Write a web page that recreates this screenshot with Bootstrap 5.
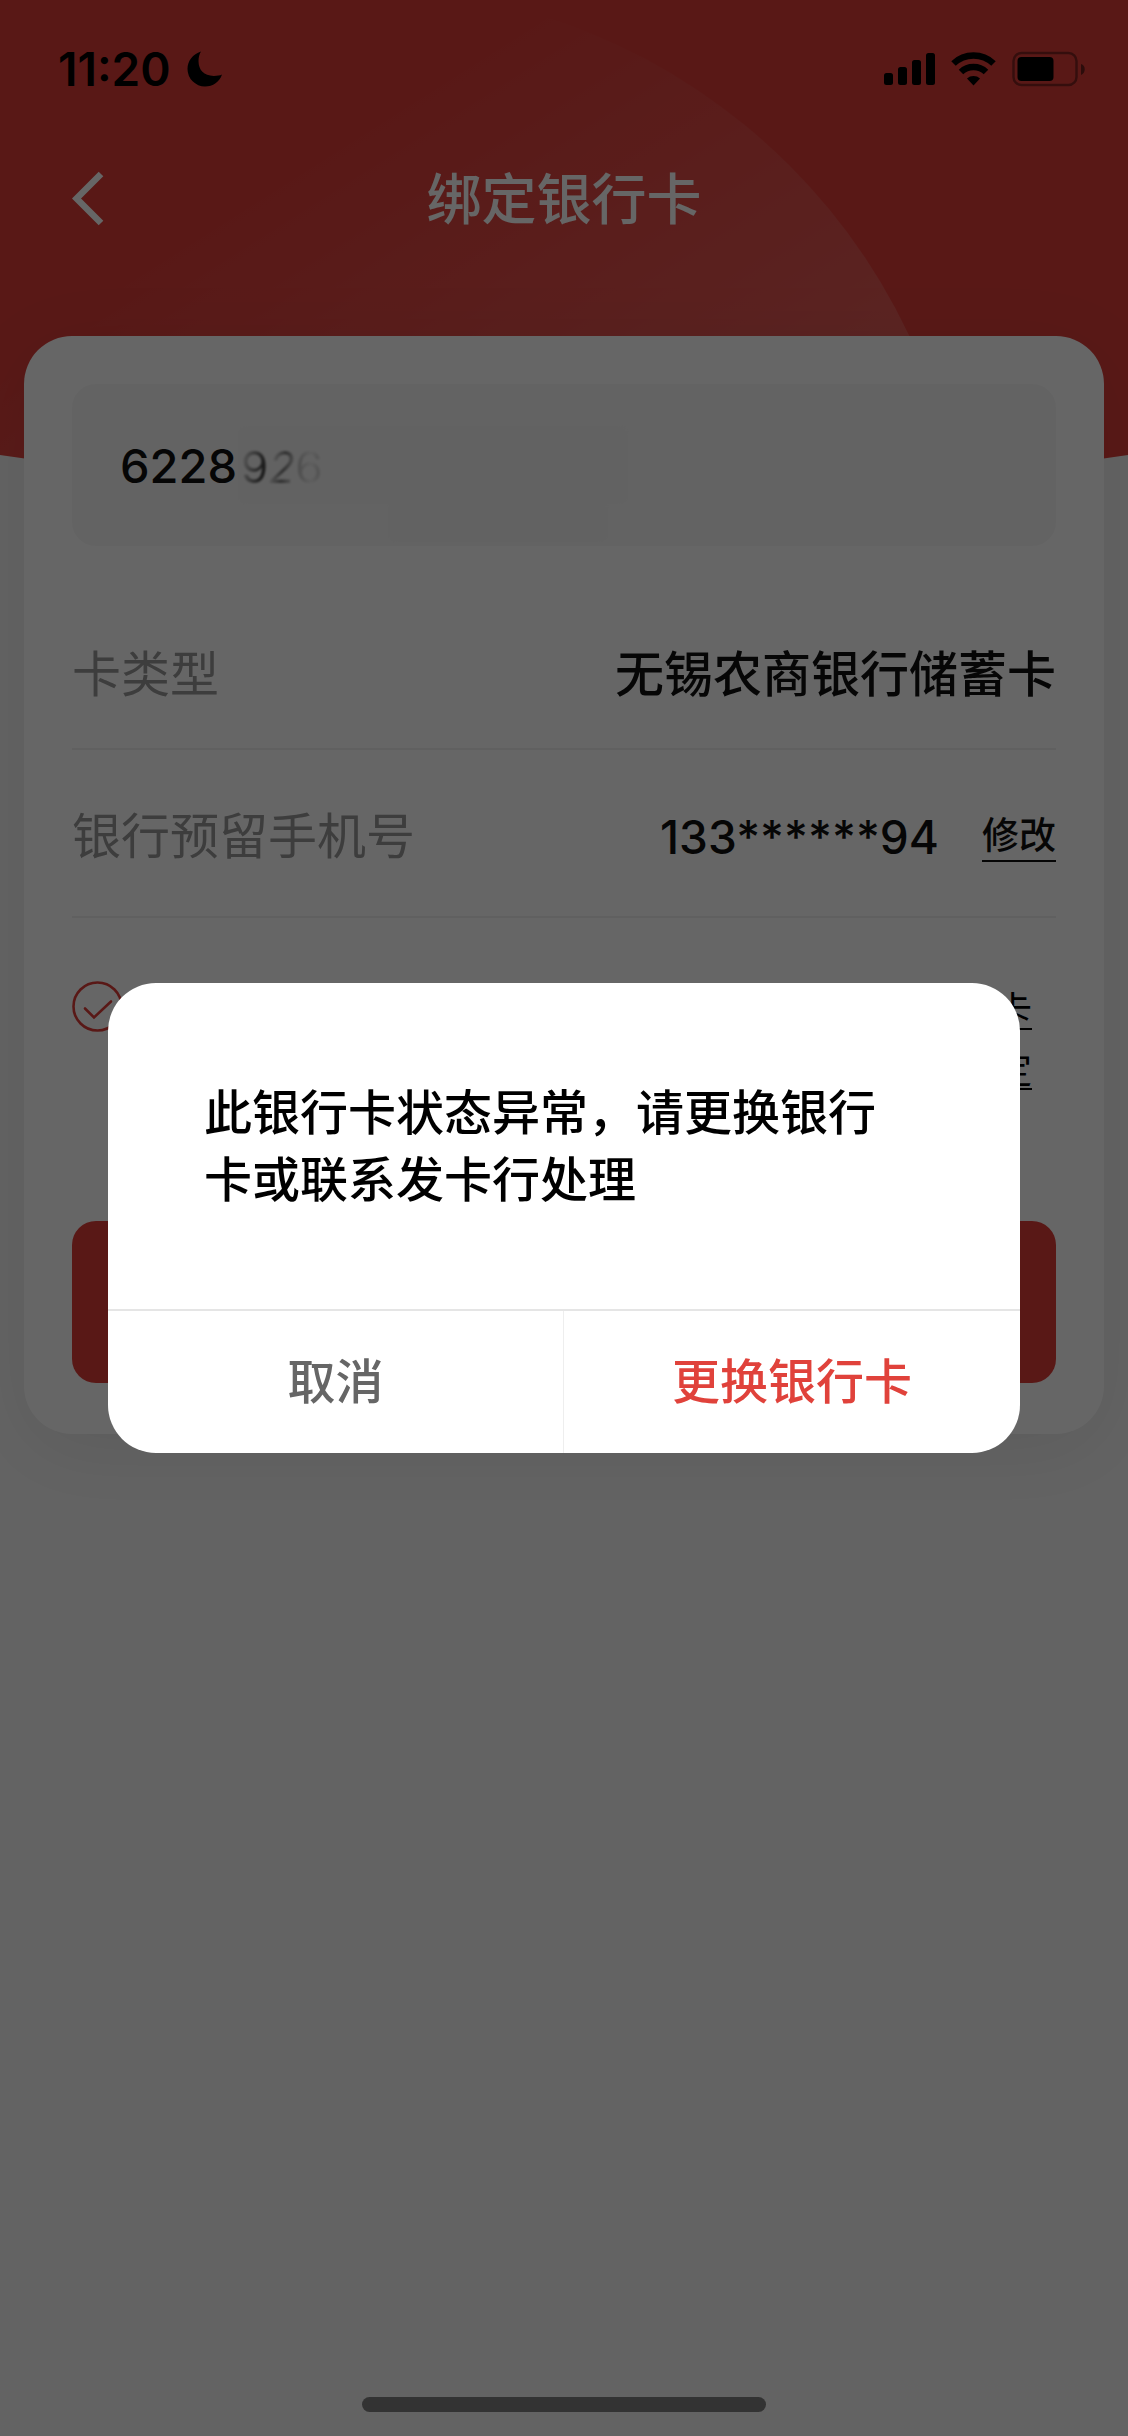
<!DOCTYPE html>
<html lang="zh-CN">
<head>
<meta charset="utf-8">
<meta name="viewport" content="width=device-width, initial-scale=1">
<title>绑定银行卡</title>
<link rel="stylesheet" href="https://cdn.jsdelivr.net/npm/bootstrap@5.3.0/dist/css/bootstrap.min.css">
<style>
  :root { --brand: #de3e39; --ink: #111; }
  body {
    font-family: Inter, "Noto Sans CJK SC", sans-serif;
    background: #f8f8f8;
    color: var(--ink);
    font-size: 48px;
    line-height: 72px;
  }
  /* red header with the curved lower edge */
  .hero { height: 500px; }
  .hero-art { position: absolute; inset: 0; width: 100%; height: 100%; }
  .status-row { height: 138px; padding: 0 42px 0 58px; color: #000; }
  .clock { font-size: 46px; font-weight: 600; }
  .title-row { height: 122px; padding: 0 72px; }
  .title-row h1 { font-size: 55px; font-weight: 500; line-height: 80px; }
  .title-side { width: 32px; }

  .bind-card {
    margin: -164px 24px 0;
    padding: 48px 48px 51px;
    border-radius: 48px;
    background: #fff;
    box-shadow: 0 16px 80px rgba(0, 0, 0, .08);
  }
  .number-box .form-control {
    height: 162px;
    padding: 0 48px;
    border: 0;
    border-radius: 24px;
    background: #f8f8f8;
    color: var(--ink);
    font-size: 47px;
    font-weight: 500;
  }
  /* smeared end of the card number */
  .smear, .smear-low { position: absolute; border-radius: 8px; background: #f5f5f5; filter: blur(1px); }
  .smear { left: 166px; top: 42px; width: 390px; height: 78px; padding-left: 3px; font-size: 44px; line-height: 82px; }
  .smear-low { left: 316px; top: 118px; width: 220px; height: 40px; }
  .fade-0, .fade-1, .fade-2 { color: transparent; background-clip: text; -webkit-background-clip: text; }
  .fade-0 { background-image: linear-gradient(100deg, #c8c8c8 20%, #444 75%); }
  .fade-1 { background-image: linear-gradient(100deg, #e8e8e8 20%, #777 55%, #ddd 90%); }
  .fade-2 { background-image: linear-gradient(90deg, #b8b8b8, #eee 60%, #c4c4c4); }

  .info-row { border-bottom: 2px solid #f0f0f0; font-size: 49px; }
  .info-first { height: 152px; margin-top: 52px; padding-top: 4px; }
  .info-second { height: 168px; padding-top: 8px; }
  .info-label { color: #999; }
  .info-value { font-weight: 500; }
  .phone { font-size: 46px; margin-right: 43px; }
  .edit-link {
    font-size: 37px; line-height: 48px; font-weight: 500;
    color: var(--ink); border-bottom: 2px solid var(--ink);
  }
  .agree { margin-top: 63px; font-size: 37px; line-height: 60px; }
  .agree .form-check-input {
    width: 51px; height: 51px; margin: 0; border: 0; background-color: transparent;
    background-size: 100% 100%;
  }
  .agree .form-check-input:checked {
    background-image: url("data:image/svg+xml,%3Csvg xmlns='http://www.w3.org/2000/svg' viewBox='0 0 51 51' fill='none' stroke='%23de3e39' stroke-width='2.6'%3E%3Ccircle cx='25.5' cy='25.5' r='24'/%3E%3Cpath d='M13 27.500l9 9 17-16' stroke-linecap='round'/%3E%3C/svg%3E");
  }
  .agree a { color: #000; padding-right: 24px; text-underline-offset: 4px; text-decoration-thickness: 2px; text-decoration-skip-ink: none; }
  .submit-btn { height: 162px; margin-top: 120px; border: 0; border-radius: 24px; background: var(--brand); }

  .modal-backdrop { --bs-backdrop-opacity: .6; }
  .tip-modal { --bs-modal-width: 912px; --bs-modal-border-radius: 48px; --bs-modal-border-width: 0px; }
  .tip-modal .modal-content { overflow: hidden; background: #fff; color: #000; }
  .tip-modal .modal-body { padding: 96px 100px 96px 96px; line-height: 67px; font-weight: 500; }
  .tip-actions { border-top: 2px solid #e5e5e5; }
  .tip-actions .btn { height: 142px; border: 0; border-radius: 0; font-size: 48px; font-weight: 500; }
  .tip-cancel { color: #666; }
  .tip-cancel.btn { border-right: 1px solid #eee; }
  .tip-change { color: #e0423b; }

  .home-bar {
    position: fixed; bottom: 24px; left: 50%; transform: translateX(-50%); z-index: 1060;
    width: 404px; max-width: 40%; height: 15px; border-radius: 8px; background: #333;
  }
</style>
<script src="https://cdn.jsdelivr.net/npm/bootstrap@5.3.0/dist/js/bootstrap.bundle.min.js"></script>
</head>
<body class="min-vh-100">
  <header class="hero position-relative">
    <svg class="hero-art" viewBox="0 0 1128 500" preserveAspectRatio="none" aria-hidden="true">
      <defs>
        <clipPath id="edge"><path d="M0 0H1128V455Q564 540 0 455Z"/></clipPath>
        <linearGradient id="glow" gradientUnits="userSpaceOnUse" x1="530" y1="20" x2="781" y2="416">
          <stop offset="0" stop-color="#fff" stop-opacity="0"/>
          <stop offset="1" stop-color="#fff" stop-opacity=".15"/>
        </linearGradient>
      </defs>
      <g clip-path="url(#edge)">
        <rect width="1128" height="500" fill="#de3e39"/>
        <circle cx="361" cy="594" r="606" fill="url(#glow)"/>
      </g>
    </svg>

    <div class="status-row position-relative d-flex align-items-center justify-content-between">
      <div class="d-flex align-items-center gap-3">
        <span class="clock">11:20</span>
        <svg width="36" height="36" viewBox="0 0 36 36" aria-hidden="true"><path d="M14 .5C5.800 3 .5 10 .5 18a17.500 17.500 0 0 0 17.500 17.500c8 0 14.500-4.500 17-12-2 1-5 1.400-8 1.400C17 25 11.500 19 11.500 10c0-3.500.8-7 2.500-9.500z"/></svg>
      </div>
      <div class="d-flex align-items-center gap-3">
        <svg width="52" height="34" viewBox="0 0 52 34" aria-hidden="true">
          <rect x="1" y="21" width="9" height="12" rx="2.500"/><rect x="15" y="15" width="9" height="18" rx="2.500"/>
          <rect x="29" y="8" width="9" height="25" rx="2.500"/><rect x="43" y="1" width="9" height="32" rx="2.500"/>
        </svg>
        <svg width="45" height="34" viewBox="0 0 45 34" aria-hidden="true">
          <g fill="none" stroke="#000" stroke-width="6.500"><path d="M2.500 11.500a29 29 0 0 1 40 0"/><path d="M10 20a18 18 0 0 1 25 0"/></g>
          <path d="M22.500 33.500l-6.500-7c3.500-3.300 9.500-3.300 13 0z"/>
        </svg>
        <svg width="74" height="36" viewBox="0 0 74 36" aria-hidden="true">
          <rect x="1.500" y="2" width="63" height="32" rx="8" fill="none" stroke="#000" stroke-opacity=".4" stroke-width="2.500"/>
          <rect x="5.500" y="6" width="36" height="24" rx="4"/>
          <path d="M69 13c5 1.500 5 9 0 11z" fill-opacity=".5"/>
        </svg>
      </div>
    </div>

    <nav class="title-row position-relative d-flex align-items-center justify-content-between text-white" aria-label="页面导航">
      <button type="button" class="title-side btn p-0 border-0 text-white d-flex" aria-label="返回">
        <svg width="32" height="56" viewBox="0 0 32 56" fill="none" stroke="currentColor" stroke-width="6.500"><path d="M29 3L4.500 27.500 29 52"/></svg>
      </button>
      <h1 class="m-0">绑定银行卡</h1>
      <span class="title-side"></span>
    </nav>
  </header>

  <main class="bind-card position-relative">
    <form>
      <div class="number-box position-relative">
        <input type="text" class="form-control" value="6228" aria-label="银行卡号">
        <span class="smear" aria-hidden="true"><span class="fade-0">9</span><i class="fade-1">2</i><span class="fade-2">6</span></span>
        <span class="smear-low" aria-hidden="true"></span>
      </div>

      <div class="info-row info-first d-flex align-items-center justify-content-between">
        <span class="info-label">卡类型</span>
        <span class="info-value">无锡农商银行储蓄卡</span>
      </div>
      <div class="info-row info-second d-flex align-items-center justify-content-between">
        <span class="info-label">银行预留手机号</span>
        <span class="d-flex align-items-center">
          <span class="info-value phone">133******94</span>
          <a href="#" class="edit-link text-decoration-none">修改</a>
        </span>
      </div>

      <div class="agree d-flex align-items-start justify-content-between">
        <input class="form-check-input" type="checkbox" checked aria-label="同意协议">
        <a href="#">卡<br>定</a>
      </div>

      <button type="button" class="submit-btn btn btn-danger w-100 d-block" aria-label="提交"></button>
    </form>
  </main>

  <div class="modal-backdrop show"></div>
  <div class="modal tip-modal d-block" role="dialog" aria-modal="true" aria-labelledby="tipText">
    <div class="modal-dialog modal-dialog-centered">
      <div class="modal-content">
        <div class="modal-body" id="tipText">此银行卡状态异常，请更换银行卡或联系发卡行处理</div>
        <div class="tip-actions row g-0">
          <button type="button" class="btn tip-cancel col-6">取消</button>
          <button type="button" class="btn tip-change col-6">更换银行卡</button>
        </div>
      </div>
    </div>
  </div>
  <div class="home-bar"></div>
</body>
</html>
